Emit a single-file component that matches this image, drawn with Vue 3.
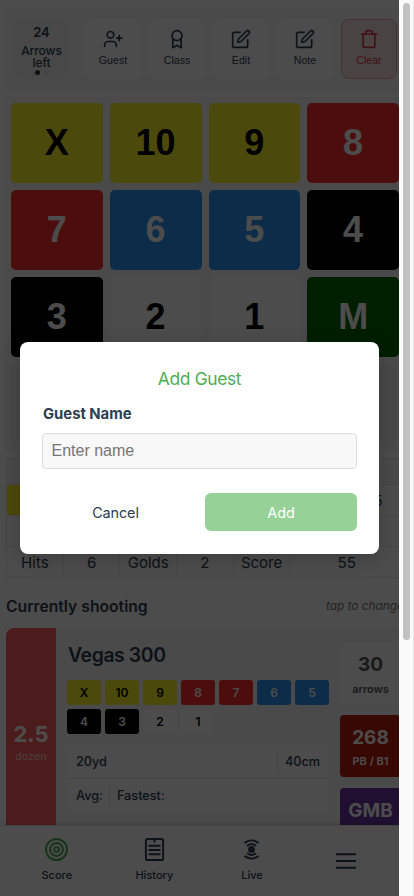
<script setup>
const keys = [
  ['X', 'gold'], ['10', 'gold'], ['9', 'gold'], ['8', 'red'],
  ['7', 'red'], ['6', 'blue'], ['5', 'blue'], ['4', 'black'],
  ['3', 'black'], ['2', 'white'], ['1', 'white'], ['M', 'miss'],
]
const chips = keys.slice(0, 11)
const tools = [
  { label: 'Guest', paths: ['M16 21v-2a4 4 0 0 0-4-4H6a4 4 0 0 0-4 4v2', 'M9 3a4 4 0 1 1 0 8a4 4 0 1 1 0-8', 'M19.5 8v6M22.5 11h-6'] },
  { label: 'Class', paths: ['M12 2a6 6 0 1 1 0 12a6 6 0 1 1 0-12', 'M7 13v9.5l5-3 5 3V13'] },
  { label: 'Edit', paths: ['M11 4H4a2 2 0 0 0-2 2v14a2 2 0 0 0 2 2h14a2 2 0 0 0 2-2v-7', 'M18.5 2.5a2.1 2.1 0 0 1 3 3L12 15l-4 1 1-4z'] },
  { label: 'Note', paths: ['M11 4H4a2 2 0 0 0-2 2v14a2 2 0 0 0 2 2h14a2 2 0 0 0 2-2v-7', 'M18.5 2.5a2.1 2.1 0 0 1 3 3L12 15l-4 1 1-4z'] },
  { label: 'Clear', danger: true, paths: ['M3 6h18', 'M5 6v14a2 2 0 0 0 2 2h10a2 2 0 0 0 2-2V6', 'M8 6V4a2 2 0 0 1 2-2h4a2 2 0 0 1 2 2v2'] },
]
</script>

<template>
  <div class="window">
    <div class="page">
      <section class="toolbar">
        <div class="remaining">
          <strong>24</strong>
          <span>Arrows left</span>
          <div class="dots"><i class="on"></i><i></i></div>
        </div>
        <button v-for="t in tools" :key="t.label" class="tool" :class="{ danger: t.danger }">
          <svg viewBox="0 0 24 24"><path v-for="p in t.paths" :key="p" :d="p" /></svg>
          <span>{{ t.label }}</span>
        </button>
      </section>

      <section class="pad">
        <div class="keys">
          <button v-for="k in keys" :key="k[0]" class="key" :class="k[1]">{{ k[0] }}</button>
        </div>
        <div class="ends"></div>
      </section>

      <section class="sheet">
        <div class="row head"></div>
        <div class="row arrows"><span class="gold"></span><span></span><span class="total">55</span></div>
        <div class="row blank"></div>
        <div class="row totals">
          <span>Hits</span><span>6</span><span>Golds</span><span>2</span><span>Score</span><span>55</span>
        </div>
      </section>

      <header class="heading"><h2>Currently shooting</h2><em>tap to change</em></header>

      <section class="round">
        <div class="dozens"><strong>2.5</strong><span>dozen</span></div>
        <div class="details">
          <h3>Vegas 300</h3>
          <div class="chips">
            <span v-for="c in chips" :key="c[0]" class="chip" :class="c[1]">{{ c[0] }}</span>
          </div>
          <div class="facts">
            <div class="fact wide"><span>20yd</span><span class="split">40cm</span></div>
            <div class="fact"><span>Avg:</span><span class="split">Fastest:</span></div>
          </div>
        </div>
        <div class="stats">
          <div class="stat count"><strong>30</strong><span>arrows</span></div>
          <div class="stat best"><strong>268</strong><span>PB / B1</span></div>
          <div class="stat grade"><strong>GMB</strong></div>
        </div>
      </section>
    </div>

    <nav class="nav">
      <a class="active">
        <svg viewBox="0 0 24 24"><circle cx="12" cy="12" r="11" /><circle cx="12" cy="12" r="6.7" /><circle cx="12" cy="12" r="2.5" /></svg>
        Score
      </a>
      <a>
        <svg viewBox="0 0 24 24"><rect x="3" y="1" width="18" height="22" rx="2" /><path d="M12 1v3M6.5 8h11M6.5 12.5h11M6.5 17h11" /></svg>
        History
      </a>
      <a>
        <svg viewBox="0 0 24 24"><circle class="solid" cx="12" cy="12" r="2.6" /><path d="M8 7.8q4-3 8 0M5.3 4.8q6.7-4.6 13.4 0M8 16.2q4 3 8 0M5.3 19.2q6.7 4.6 13.4 0" /></svg>
        Live
      </a>
      <a class="menu"><svg viewBox="0 0 24 24"><path d="M0 4h24M0 12h24M0 20h24" /></svg></a>
    </nav>

    <div class="overlay">
      <form class="modal" @submit.prevent>
        <h2>Add Guest</h2>
        <label for="guest">Guest Name</label>
        <input id="guest" type="text" placeholder="Enter name" />
        <div class="actions">
          <button type="button">Cancel</button>
          <button type="submit" class="add">Add</button>
        </div>
      </form>
    </div>
    <div class="scrollbar"><div class="thumb"></div></div>
  </div>
</template>

<style>
body { overflow: hidden; background: #fff; }
</style>

<style scoped>
* { box-sizing: border-box; }
.window { position: relative; width: 414px; height: 896px; overflow: hidden; font-family: Inter, "Liberation Sans", sans-serif; color: #2c3e50; }
.page { width: 399px; height: 825px; padding: 8px 0 0 5px; overflow: hidden; background: #fff; }
button { font: inherit; color: inherit; border: 0; padding: 0; margin: 0; }
h2, h3 { margin: 0; font-weight: 600; }
svg { fill: none; stroke: currentColor; stroke-width: 2; stroke-linecap: round; stroke-linejoin: round; }
.gold { background: #fff62a; color: #000; }
.red { background: #ff2d2d; color: #fff; }
.blue { background: #2b94f3; color: #fff; }
.black { background: #000; color: #fff; }
.white { background: #fff; color: #000; }
.miss { background: #006400; color: #fff; }

.toolbar { width: 404px; height: 83px; padding: 11px 9px; display: flex; gap: 8px; border-radius: 8px; background: #f8f8f8; box-shadow: 0 1px 2px #0001; }
.remaining { flex: none; width: 55px; height: 60px; margin-right: 8px; padding-top: 5px; display: flex; flex-direction: column; align-items: center; text-align: center; border-radius: 8px; background: #f0f1f2; }
.remaining strong { font-size: 13px; line-height: 17px; font-weight: 600; }
.remaining span { margin-top: 4px; font-size: 12px; line-height: 12px; font-weight: 500; letter-spacing: -.1px; }
.dots { display: flex; gap: 4px; margin-top: 1px; }
.dots i { width: 5px; height: 5px; border-radius: 50%; background: #dfe2e5; }
.dots .on { background: #2c3e50; }
.tool { flex: none; width: 56px; height: 60px; padding-top: 10px; display: flex; flex-direction: column; align-items: center; border-radius: 8px; background: #fff; font: 10.6px/13px "Liberation Sans", sans-serif; }
.tool svg { width: 20px; height: 20px; margin-bottom: 5px; }
.danger { background: #f8e1e5; color: #dc3545; border: 1px solid #e5a0a8; padding-top: 9px; }

.pad { margin-top: 6px; width: 404px; height: 353px; padding: 6px 0 0 6px; background: #f8f8f8; border-radius: 6px; box-shadow: 0 1px 2px #0001; }
.keys { width: 388px; display: grid; grid-template-columns: repeat(4, 1fr); gap: 7px; }
.key { height: 80px; border-radius: 5px; font: bold 36px/80px "Liberation Sans", sans-serif; }
.ends { width: 388px; height: 80px; margin-top: 8px; border-radius: 6px; background: #f2f2f2; }

.sheet { width: 398px; margin: 8px 0 0 1px; border: 1px solid #ececec; border-bottom: 0; font-size: 15px; }
.row { display: flex; height: 31px; border-bottom: 1px solid #ececec; }
.row span { display: flex; align-items: center; justify-content: center; }
.head { height: 26px; background: #f4f4f4; }
.arrows .gold { width: 57px; }
.arrows .total { width: 59px; margin-left: auto; }
.totals span { width: 56.7px; border-right: 1px solid #ececec; }
.totals span:last-child { flex: 1; border: 0; }

.heading { width: 404px; height: 50px; padding: 6px 0 0 1px; display: flex; align-items: center; justify-content: space-between; white-space: nowrap; }
.heading h2 { font-size: 15.7px; }
.heading em { width: 83px; font-size: 11.8px; color: #777; }

.round { margin-left: 1px; width: 406px; height: 240px; display: flex; border-radius: 8px; overflow: hidden; background: #f8f8f8; }
.dozens { width: 50px; padding-top: 93px; display: flex; flex-direction: column; align-items: center; background: #ff6060; color: #fff; }
.dozens strong { font-size: 22px; line-height: 27px; }
.dozens span { margin-top: 1px; font-size: 10.8px; line-height: 16px; opacity: .7; }
.details { width: 262px; margin-left: 11px; padding-top: 15px; }
.details h3 { padding-left: 1px; font-size: 19.4px; line-height: 25px; letter-spacing: -.4px; }
.chips { display: flex; flex-wrap: wrap; gap: 4px; margin-top: 12px; }
.chip { width: 34px; height: 25px; border-radius: 3px; font-size: 12px; line-height: 25px; font-weight: 600; text-align: center; }
.facts { margin-top: 11px; height: 67px; border-radius: 5px; background: #fff; }
.fact { display: flex; height: 34px; align-items: center; padding: 0 9px; font-size: 12.7px; line-height: 20px; font-weight: 500; }
.fact.wide { justify-content: space-between; border-bottom: 1px solid #e5e5e5; }
.fact .split { height: 20px; padding-left: 7px; margin-left: 6px; border-left: 1px solid #e0e0e0; }
.stats { margin: 15px 0 0 11px; width: 61px; display: flex; flex-direction: column; gap: 11px; }
.stat { height: 62px; padding-top: 11px; display: flex; flex-direction: column; align-items: center; border-radius: 4px; color: #fff; }
.stat strong { font-size: 19px; line-height: 24px; }
.stat span { margin-top: 4px; font-size: 11px; line-height: 15px; font-weight: 600; }
.count { height: 61px; padding-top: 10px; background: #fff; color: #555; }
.count span { margin-top: 5px; }
.best { background: #bd1c0c; }
.grade { background: #6b35a5; }

.nav { width: 399px; height: 71px; padding: 12px 5px 0 8px; display: grid; grid-template-columns: 97.6px 97.6px 97.6px 91px; background: #fff; border-top: 1px solid #e5e5e5; box-shadow: 0 -1px 4px #0002; position: relative; }
.nav a { display: flex; flex-direction: column; align-items: center; font-size: 11px; line-height: 14px; font-weight: 500; }
.nav svg { width: 23px; height: 23px; margin-bottom: 7px; }
.nav .active svg { color: #4caf50; }
.nav .solid { fill: currentColor; }
.nav .menu svg { margin-top: 13px; width: 20px; height: 20px; stroke-width: 2.4; stroke-linecap: butt; }

.overlay { position: absolute; left: 0; top: 0; width: 399px; height: 896px; display: flex; align-items: center; justify-content: center; background: rgba(0, 0, 0, .7); }
.modal { width: 359px; height: 212px; padding: 26px 22px 0; border-radius: 8px; background: #fff; box-shadow: 0 4px 20px #0003; }
.modal h2 { font-size: 17.4px; line-height: 22px; font-weight: 400; letter-spacing: -.35px; color: #4caf50; text-align: center; }
.modal label { display: block; margin: 15px 0 0 1px; font-size: 14.8px; line-height: 19px; font-weight: 700; }
.modal input { display: block; width: 315px; height: 36px; margin-top: 9px; padding: 0 8.5px; border: 1px solid #ddd; border-radius: 4px; background: #f8f8f8; font: 16px "Liberation Sans", sans-serif; }
.modal input::placeholder { color: #757575; }
.actions { display: grid; grid-template-columns: 147px 152px; gap: 16px; margin-top: 24px; }
.actions button { height: 38px; border-radius: 6px; background: none; font-size: 14.4px; letter-spacing: -.1px; }
.actions .add { background: #96d197; color: #fff; }

.scrollbar { position: absolute; right: 0; top: 0; width: 15px; height: 896px; padding: 3px 3px 0 4px; background: #fafafa; border-right: 1px solid #e8e8e8; }
.thumb { height: 637px; border-radius: 4px; background: #c1c1c1; }
</style>
